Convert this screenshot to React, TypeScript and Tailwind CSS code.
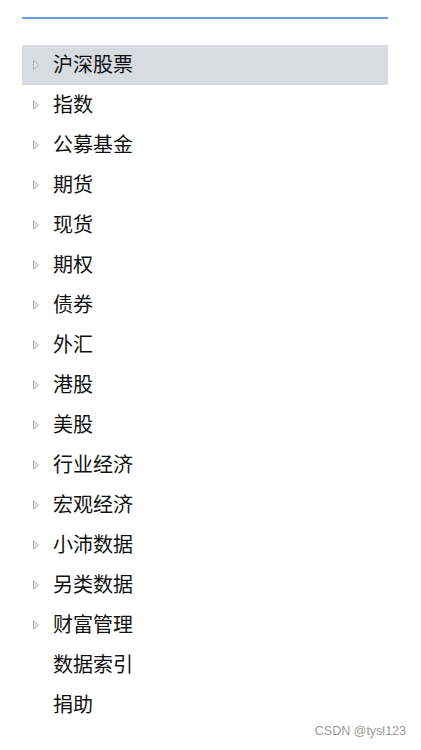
import React from 'react'

const items = [
  { label: '沪深股票', children: true },
  { label: '指数', children: true },
  { label: '公募基金', children: true },
  { label: '期货', children: true },
  { label: '现货', children: true },
  { label: '期权', children: true },
  { label: '债券', children: true },
  { label: '外汇', children: true },
  { label: '港股', children: true },
  { label: '美股', children: true },
  { label: '行业经济', children: true },
  { label: '宏观经济', children: true },
  { label: '小沛数据', children: true },
  { label: '另类数据', children: true },
  { label: '财富管理', children: true },
  { label: '数据索引', children: false },
  { label: '捐助', children: false },
]

function Caret() {
  return (
    <svg width="8" height="12" viewBox="0 0 8 12" className="shrink-0">
      <path d="M1.5 1.5 L6.5 6 L1.5 10.5 Z" fill="#e4e4e4" stroke="#b4b4b4" strokeWidth="1" />
    </svg>
  )
}

export default function App() {
  return (
    <div
      className="relative h-[750px] w-[421px] bg-white"
      style={{ fontFamily: '"Noto Sans CJK SC", "Liberation Sans", sans-serif' }}
    >
      <div className="ml-[22px] w-[366px] pt-[17px]">
        <div className="h-[2px] bg-[#6c9be8]" />
        <ul className="mt-[26px]">
          {items.map((item, i) => (
            <li
              key={item.label}
              className={`flex h-10 items-center ${i === 0 ? 'bg-[#d8dbe2]' : ''}`}
            >
              <span className="flex w-[31px] justify-end pr-[13px]">
                {item.children && <Caret />}
              </span>
              <span className="pb-[3px] text-[20px] leading-none text-[#111]">{item.label}</span>
            </li>
          ))}
        </ul>
      </div>
      <div
        className="absolute bottom-[9px] right-[15px] text-[12.5px] text-[#999]"
        style={{ fontFamily: '"Liberation Sans", sans-serif' }}
      >
        CSDN @tysl123
      </div>
    </div>
  )
}
